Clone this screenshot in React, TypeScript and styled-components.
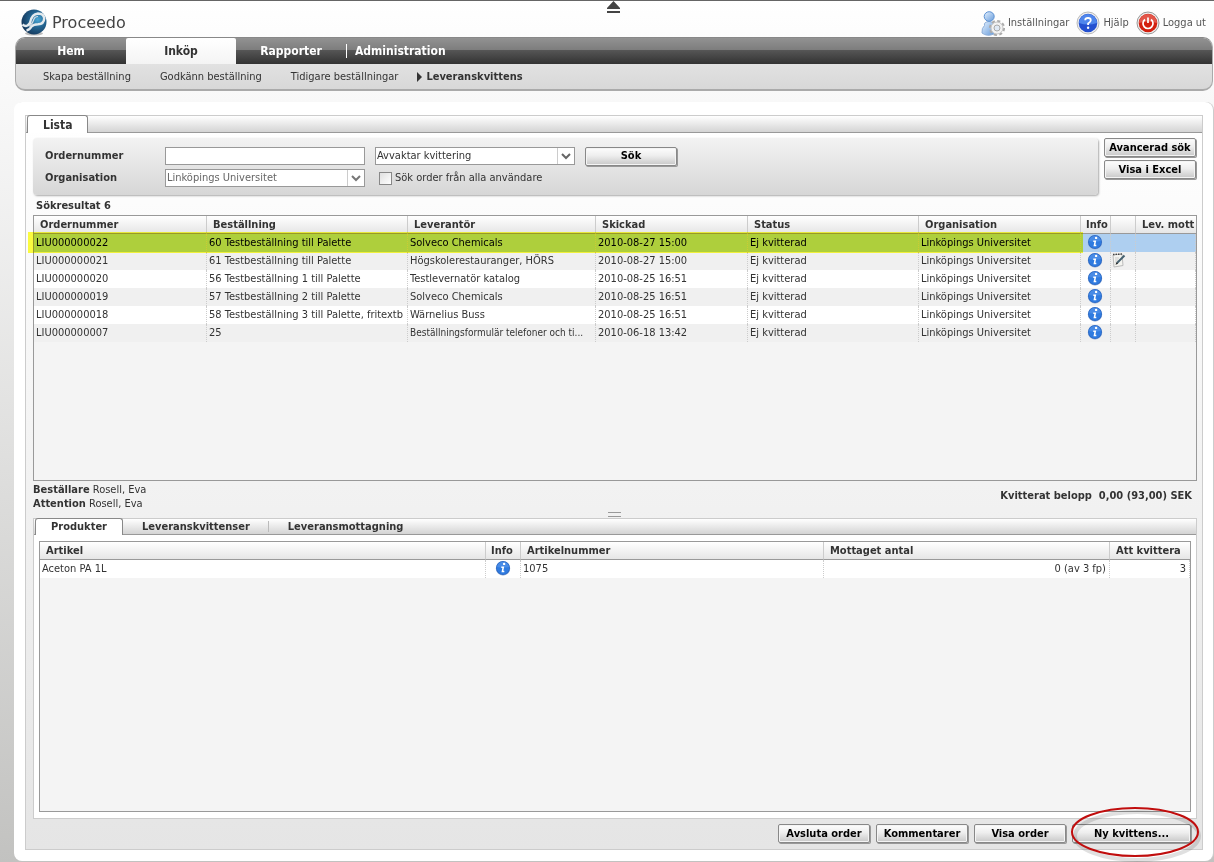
import React from "react";
import styled, { createGlobalStyle, css } from "styled-components";

const GlobalStyle = createGlobalStyle`
  * { box-sizing: border-box; }
  html { min-height: 100%; }
  body {
    margin: 0;
    color: #333;
    font: 11px/14px "DejaVu Sans Condensed", "DejaVu Sans", sans-serif;
    background: linear-gradient(#fff 0, #f8f8f8 12%, #c2c2c0 100%);
  }
  button, input, select { font: inherit; color: inherit; }
`;

const Page = styled.div`
  display: flex;
  flex-direction: column;
  min-height: 100vh;
  padding: 0 1px 2px 14px;
  border-top: 1px solid #666;
`;

const Header = styled.header`
  display: grid;
  grid-template-columns: 1fr auto 1fr;
  height: 36px;
  padding: 0 7px 0 7px;
`;

const Brand = styled.a`
  display: flex;
  align-items: center;
  gap: 5px;
  padding-top: 7px;
  color: #444;
  font-family: "DejaVu Sans", sans-serif;
  font-size: 16px;
  line-height: 20px;
  text-decoration: none;
`;

const CollapseButton = styled.button`
  align-self: start;
  display: flex;
  padding: 0;
  border: 0;
  background: none;
`;

const Tools = styled.nav`
  display: flex;
  justify-content: flex-end;
  align-items: center;
  gap: 7px;
  padding-top: 8px;
`;

const ToolLink = styled.a`
  display: flex;
  align-items: center;
  gap: 3px;
  color: #555;
  text-decoration: none;
`;

const NavFrame = styled.nav`
  overflow: hidden;
  margin-left: 1px;
  border: 1px solid #aaa;
  border-top-color: #888;
  border-bottom-width: 2px;
  border-radius: 10px;
  background: linear-gradient(#ebebeb, #d8d8d8);
`;

const MainNav = styled.div`
  display: flex;
  height: 26px;
  background: linear-gradient(#929292 0, #7c7c7c 48%, #555 48%, #333 100%);
`;

const MainItem = styled.a<{ $active?: boolean; $wide?: boolean }>`
  display: flex;
  align-items: center;
  justify-content: center;
  width: ${(p) => (p.$wide ? "auto" : "110px")};
  color: #fff;
  font-size: 12px;
  font-weight: bold;
  text-decoration: none;
  ${(p) =>
    p.$active &&
    css`
      color: #333;
      border-radius: 2px 2px 0 0;
      background: linear-gradient(#fff, #f4f4f4);
    `}
`;

const Divider = styled.span<{ $light?: boolean }>`
  align-self: center;
  width: 1px;
  height: ${(p) => (p.$light ? "11px" : "14px")};
  margin-right: ${(p) => (p.$light ? "0" : "8px")};
  background: ${(p) => (p.$light ? "#bbb" : "#fff")};
`;

const SubNav = styled.div`
  display: flex;
  align-items: center;
  gap: 29px;
  height: 25px;
  padding-left: 27px;
`;

const SubItem = styled.a<{ $active?: boolean }>`
  display: flex;
  align-items: center;
  gap: 4px;
  color: #333;
  text-decoration: none;
  font-weight: ${(p) => (p.$active ? "bold" : "normal")};
  margin-left: ${(p) => (p.$active ? "-10px" : "0")};
`;

const Panel = styled.main`
  display: flex;
  flex: 1;
  flex-direction: column;
  margin-top: 11px;
  padding: 13px 10px 11px 11px;
  border-radius: 8px;
  background: #fff;
  box-shadow: 1px 0 0 #ccc;
`;

const Frame = styled.section`
  display: flex;
  flex: 1;
  flex-direction: column;
  border: 1px solid #ccc;
  background: linear-gradient(#fff, #e5e5e5);
`;

const TabBar = styled.div<{ $inner?: boolean }>`
  display: flex;
  height: ${(p) => (p.$inner ? "16px" : "17px")};
  border-bottom: 1px solid #999;
  background: linear-gradient(#fff, #d4d4d4);
`;

const Tab = styled.button<{ $active?: boolean; $large?: boolean }>`
  height: ${(p) => (p.$large ? "18px" : "17px")};
  margin: -1px 0 0 1px;
  padding: 0 18px;
  border: 0;
  background: none;
  font-size: ${(p) => (p.$large ? "12px" : "11px")};
  line-height: 16px;
  font-weight: bold;
  ${(p) =>
    p.$active &&
    css`
      padding: 0 15px;
      border: 1px solid #888;
      border-bottom: 0;
      border-radius: 3px 3px 0 0;
      background: #fff;
    `}
`;

const SearchRow = styled.form`
  display: flex;
  align-items: flex-start;
  gap: 6px;
  padding: 5px 6px 0 7px;
`;

const SearchBox = styled.div`
  flex: 1;
  display: grid;
  grid-template-columns: 110px 200px 200px 92px;
  grid-template-rows: 18px 18px;
  column-gap: 10px;
  row-gap: 4px;
  align-items: center;
  height: 57px;
  padding: 9px 0 0 12px;
  border-radius: 4px;
  background: linear-gradient(#f3f3f3, #d6d6d6);
  box-shadow: 1px 1px 2px #aaa;
`;

const FieldLabel = styled.label`
  font-weight: bold;
`;

const TextInput = styled.input`
  width: 100%;
  height: 18px;
  padding: 0 2px;
  border: 1px solid #999;
  background: #fff;
`;

const SelectFrame = styled.span`
  display: grid;
  grid-template-columns: 1fr 17px;
  height: 18px;
  border: 1px solid #999;
  background: #fff;
  svg {
    grid-area: 1 / 2;
    pointer-events: none;
  }
`;

const Select = styled.select<{ $muted?: boolean }>`
  grid-area: 1 / 1 / 2 / 3;
  width: 100%;
  height: 16px;
  padding: 0 1px;
  border: 0;
  appearance: none;
  background: transparent;
  color: ${(p) => (p.$muted ? "#666" : "#333")};
`;

const CheckLabel = styled.label`
  display: flex;
  align-items: center;
  gap: 3px;
  padding-left: 4px;
  white-space: nowrap;
`;

const CheckBox = styled.input`
  width: 13px;
  height: 13px;
  margin: 0;
  appearance: none;
  border: 1px solid #888;
  background: linear-gradient(135deg, #e0e0e0, #fff);
  &:checked { background: #666; }
`;

const Button = styled.button<{ $wide?: boolean }>`
  width: ${(p) => (p.$wide ? "119px" : "92px")};
  height: 19px;
  padding: 0;
  border: 1px solid #888;
  border-radius: 2px;
  background: linear-gradient(#fdfdfd, #eee 45%, #c8c8c8);
  box-shadow: 1px 1px 0 #999, inset 0 0 0 1px #f4f4f4;
  color: #000;
  font-weight: bold;
  line-height: 16px;
  white-space: nowrap;
`;

const SideButtons = styled.div`
  display: flex;
  flex-direction: column;
  gap: 3px;
`;

const ResultCount = styled.h2`
  margin: 4px 0 2px 10px;
  font-size: 11px;
  line-height: 14px;
`;

const GridBox = styled.div<{ $lower?: boolean }>`
  flex: 1 0 ${(p) => (p.$lower ? "271px" : "266px")};
  position: relative;
  margin: ${(p) => (p.$lower ? "6px 5px 6px" : "0 5px 0 7px")};
  border: 1px solid #999;
  background: #f4f4f4;
`;

const Table = styled.table`
  width: 100%;
  table-layout: fixed;
  border-collapse: separate;
  border-spacing: 0;
`;

const Th = styled.th<{ $tight?: boolean }>`
  height: 18px;
  padding: 0 0 0 ${(p) => (p.$tight ? "5px" : "6px")};
  overflow: hidden;
  border-right: 1px solid #ccc;
  border-bottom: 1px solid #999;
  background: linear-gradient(#fff, #e6e6e6);
  text-align: left;
  white-space: nowrap;
  &:last-child { border-right: 0; }
`;

const Td = styled.td<{ $right?: boolean; $compact?: boolean }>`
  height: 18px;
  padding: 0 ${(p) => (p.$right ? "3px" : "0")} 0 2px;
  overflow: hidden;
  border-right: 1px dotted #ccc;
  font-size: ${(p) => (p.$compact ? "10px" : "11px")};
  text-align: ${(p) => (p.$right ? "right" : "left")};
  white-space: nowrap;
`;

const IconTd = styled(Td)<{ $start?: boolean }>`
  padding: 0 ${(p) => (p.$start ? "8px" : "1px")} 0 0;
  line-height: 0;
  text-align: center;
  vertical-align: top;
`;

const Row = styled.tr<{ $selected?: boolean }>`
  color: ${(p) => (p.$selected ? "#000" : "#333")};
  background: ${(p) => (p.$selected ? "#aecff0" : "#fff")};
  &:nth-child(even) { background: #f0f0f0; }
`;

const Marker = styled.div`
  position: absolute;
  top: 16px;
  left: -6px;
  right: 113px;
  height: 21px;
  background: #ffff40;
  mix-blend-mode: multiply;
  pointer-events: none;
`;

const Summary = styled.div`
  display: flex;
  justify-content: space-between;
  align-items: center;
  height: 30px;
  margin-top: 1px;
  padding: 0 10px 0 7px;
`;

const Person = styled.p`
  margin: 0;
`;

const Amount = styled.p`
  margin: 0;
  padding-bottom: 2px;
  font-weight: bold;
`;

const Splitter = styled.div`
  display: flex;
  justify-content: center;
  height: 6px;
  &::before {
    content: "";
    width: 13px;
    height: 3px;
    border: solid #999;
    border-width: 1px 0;
  }
`;

const Details = styled.section`
  display: flex;
  flex: 1 0 auto;
  flex-direction: column;
  margin: 0 5px 0 7px;
  border: 1px solid #ccc;
  background: #fff;
`;

const Actions = styled.div`
  display: flex;
  justify-content: flex-end;
  gap: 6px;
  padding: 5px 11px 6px;
`;

const Circled = styled.span`
  position: relative;
  display: flex;
  svg {
    position: absolute;
    top: -19px;
    left: -4px;
    pointer-events: none;
  }
`;

const Arrow = ({ muted }: { muted?: boolean }) => (
  <svg width="17" height="16" aria-hidden="true">
    <path d="M.5 0v16" stroke="#ccc" />
    <path d="M5 6l4 4 4-4" fill="none" stroke={muted ? "#777" : "#666"} strokeWidth="2" />
  </svg>
);

const InfoIcon = () => (
  <svg width="16" height="16" viewBox="0 0 16 16" role="img" aria-label="Info">
    <circle cx="8" cy="8.5" r="7.2" fill="#a9bdda" />
    <circle cx="8" cy="8" r="7" fill="#2b68c4" />
    <circle cx="8" cy="8" r="6.2" fill="#2f7be0" />
    <path d="M2.2 7a5.800 5.200 0 0 1 11.600 0Q8 8.500 2.200 7" fill="#78aaf0" opacity=".35" />
    <circle cx="9.100" cy="3.900" r="1.200" fill="#fff" />
    <path d="M6.300 7.200H8.300L7.400 11.500H9.300" fill="none" stroke="#fff" strokeWidth="1.500" />
  </svg>
);

const NoteIcon = () => (
  <svg width="16" height="16" viewBox="0 0 16 16" role="img" aria-label="Kommentar">
    <path d="M2 3L11 2l1 11.500-9 1.500z" fill="#f4f4f0" stroke="#bbb" />
    <path d="M2 2.500l10-.5" stroke="#444" strokeWidth="1.500" strokeDasharray="1.500 1" />
    <path d="M4 6h4M4 8h3M4 10h2" stroke="#ccc" />
    <path d="M6 11L13.500 3.500" stroke="#456070" strokeWidth="2" />
    <path d="M4.500 12.800l1-2.500 1.700 1.400z" fill="#222" />
  </svg>
);

const Logo = () => (
  <svg width="26" height="27" viewBox="0 0 26 27" aria-hidden="true">
    <defs>
      <radialGradient id="globe" cx=".65" cy=".4" r=".65">
        <stop offset="0" stopColor="#4aa8d6" />
        <stop offset=".5" stopColor="#23638f" />
        <stop offset="1" stopColor="#163a5e" />
      </radialGradient>
    </defs>
    <ellipse cx="13" cy="24.500" rx="9" ry="2" fill="#bbb" />
    <circle cx="13" cy="13" r="12.500" fill="url(#globe)" />
    <path d="M1.500 15.500Q6 19 9 14Q10.500 5 17 4.500Q23 4.500 23.200 9.500Q23 15 17 15.300Q12.500 15.300 10.500 17.500Q8.500 21 5.500 21.500" fill="none" stroke="#e4eaee" strokeWidth="2.500" />
    <path d="M8.500 17.500Q12 14 13 10Q14 7.500 17 7.500" fill="none" stroke="#d5dee5" strokeWidth="1.200" />
  </svg>
);

const SettingsIcon = () => (
  <svg width="24" height="25" viewBox="0 0 24 25" aria-hidden="true">
    <defs>
      <linearGradient id="person" x1="0" y1="0" x2="1" y2="1">
        <stop offset="0" stopColor="#e6f2ff" />
        <stop offset="1" stopColor="#669bdb" />
      </linearGradient>
    </defs>
    <path d="M1 22Q.5 17 3.500 14.500Q2.500 11 8 10.500Q13 11 13 15L13 23Q6 26 1 22z" fill="url(#person)" stroke="#8fafd8" />
    <ellipse cx="8.200" cy="5.500" rx="5" ry="4.800" fill="url(#person)" stroke="#5c91d2" />
    <circle cx="16" cy="17" r="6.800" fill="none" stroke="#aaa" strokeWidth="2.500" strokeDasharray="3 2.340" />
    <circle cx="16" cy="17" r="6" fill="#f2f2f2" stroke="#c4c4c4" />
    <circle cx="16" cy="17" r="3" fill="#dfe9f5" stroke="#aaa" />
  </svg>
);

const HelpIcon = () => (
  <svg width="24" height="24" viewBox="0 0 24 24" aria-hidden="true">
    <circle cx="12" cy="12" r="11" fill="#eee" stroke="#bbb" />
    <circle cx="12" cy="12" r="9.300" fill="#2450d0" />
    <path d="M3 12a9 9 0 0 1 18 0Q12 15 3 12" fill="#4f86ec" />
    <path d="M9.200 9.300Q9.200 7 12 7Q14.800 7 14.800 9.200Q14.800 10.800 12.100 12.500V14" fill="none" stroke="#fff" strokeWidth="1.800" />
    <circle cx="12.100" cy="16.700" r="1.200" fill="#fff" />
  </svg>
);

const PowerIcon = () => (
  <svg width="24" height="24" viewBox="0 0 24 24" aria-hidden="true">
    <circle cx="12" cy="12" r="11" fill="#eee" stroke="#999" />
    <circle cx="12" cy="12" r="9.300" fill="#d3200f" />
    <path d="M3 12a9 9 0 0 1 18 0Q12 9 3 12" fill="#e2564a" />
    <path d="M9 8.500a5 5 0 1 0 6 0M12 6.500v5.500" fill="none" stroke="#fff" strokeWidth="1.700" />
  </svg>
);

const orders = [
  ["LIU000000022", "60 Testbeställning till Palette", "Solveco Chemicals", "2010-08-27 15:00"],
  ["LIU000000021", "61 Testbeställning till Palette", "Högskolerestauranger, HÖRS", "2010-08-27 15:00"],
  ["LIU000000020", "56 Testbeställning 1 till Palette", "Testlevernatör katalog", "2010-08-25 16:51"],
  ["LIU000000019", "57 Testbeställning 2 till Palette", "Solveco Chemicals", "2010-08-25 16:51"],
  ["LIU000000018", "58 Testbeställning 3 till Palette, fritextb", "Wärnelius Buss", "2010-08-25 16:51"],
  ["LIU000000007", "25", "Beställningsformulär telefoner och ti...", "2010-06-18 13:42"],
];

const orderWidths = [173, 201, 188, 152, 171, 162, 30, 25];
const productWidths = [446, 35, 303, 286];

export default function App() {
  return (
    <>
      <GlobalStyle />
      <Page>
        <Header>
          <Brand href="#"><Logo />Proceedo</Brand>
          <CollapseButton aria-label="Dölj sidhuvud">
            <svg width="13" height="12" aria-hidden="true">
              <path d="M6.500 0L13 7v1H0V7zM0 10h13v2H0z" fill="#444" />
            </svg>
          </CollapseButton>
          <Tools>
            <ToolLink href="#"><SettingsIcon />Inställningar</ToolLink>
            <ToolLink href="#"><HelpIcon />Hjälp</ToolLink>
            <ToolLink href="#"><PowerIcon />Logga ut</ToolLink>
          </Tools>
        </Header>

        <NavFrame>
          <MainNav>
            <MainItem href="#">Hem</MainItem>
            <MainItem href="#" $active>Inköp</MainItem>
            <MainItem href="#">Rapporter</MainItem>
            <Divider />
            <MainItem href="#" $wide>Administration</MainItem>
          </MainNav>
          <SubNav>
            <SubItem href="#">Skapa beställning</SubItem>
            <SubItem href="#">Godkänn beställning</SubItem>
            <SubItem href="#">Tidigare beställningar</SubItem>
            <SubItem href="#" $active>
              <svg width="5" height="10" aria-hidden="true"><path d="M0 0l5 5-5 5z" fill="#333" /></svg>
              Leveranskvittens
            </SubItem>
          </SubNav>
        </NavFrame>

        <Panel>
          <Frame>
            <TabBar><Tab $active $large>Lista</Tab></TabBar>
            <SearchRow onSubmit={(e) => e.preventDefault()}>
              <SearchBox>
                <FieldLabel htmlFor="order">Ordernummer</FieldLabel>
                <TextInput id="order" />
                <SelectFrame>
                  <Select aria-label="Status"><option>Avvaktar kvittering</option></Select>
                  <Arrow />
                </SelectFrame>
                <Button>Sök</Button>
                <FieldLabel htmlFor="org">Organisation</FieldLabel>
                <SelectFrame>
                  <Select id="org" $muted><option>Linköpings Universitet</option></Select>
                  <Arrow muted />
                </SelectFrame>
                <CheckLabel><CheckBox type="checkbox" />Sök order från alla användare</CheckLabel>
              </SearchBox>
              <SideButtons>
                <Button type="button">Avancerad sök</Button>
                <Button type="button">Visa i Excel</Button>
              </SideButtons>
            </SearchRow>

            <ResultCount>Sökresultat 6</ResultCount>
            <GridBox>
              <Table>
                <colgroup>
                  {orderWidths.map((w, i) => <col key={i} width={w} />)}
                  <col />
                </colgroup>
                <thead>
                  <tr>
                    <Th>Ordernummer</Th><Th>Beställning</Th><Th>Leverantör</Th><Th>Skickad</Th>
                    <Th>Status</Th><Th>Organisation</Th><Th $tight>Info</Th><Th /><Th>Lev. mott</Th>
                  </tr>
                </thead>
                <tbody>
                  {orders.map((cells, i) => (
                    <Row key={cells[0]} $selected={i === 0}>
                      {cells.map((c, j) => <Td key={j} $compact={j === 2 && c.length > 30}>{c}</Td>)}
                      <Td>Ej kvitterad</Td>
                      <Td>Linköpings Universitet</Td>
                      <IconTd><InfoIcon /></IconTd>
                      <IconTd $start>{i === 1 && <NoteIcon />}</IconTd>
                      <Td />
                    </Row>
                  ))}
                </tbody>
              </Table>
              <Marker />
            </GridBox>

            <Summary>
              <div>
                <Person><b>Beställare</b> Rosell, Eva</Person>
                <Person><b>Attention</b> Rosell, Eva</Person>
              </div>
              <Amount>Kvitterat belopp&nbsp; 0,00 (93,00) SEK</Amount>
            </Summary>
            <Splitter />

            <Details>
              <TabBar $inner>
                <Tab $active>Produkter</Tab>
                <Tab>Leveranskvittenser</Tab>
                <Divider $light />
                <Tab>Leveransmottagning</Tab>
              </TabBar>
              <GridBox $lower>
                <Table>
                  <colgroup>
                    {productWidths.map((w, i) => <col key={i} width={w} />)}
                    <col />
                  </colgroup>
                  <thead>
                    <tr>
                      <Th>Artikel</Th><Th $tight>Info</Th><Th>Artikelnummer</Th>
                      <Th>Mottaget antal</Th><Th>Att kvittera</Th>
                    </tr>
                  </thead>
                  <tbody>
                    <Row>
                      <Td>Aceton PA 1L</Td>
                      <IconTd><InfoIcon /></IconTd>
                      <Td>1075</Td>
                      <Td $right>0 (av 3 fp)</Td>
                      <Td $right>3</Td>
                    </Row>
                  </tbody>
                </Table>
              </GridBox>
            </Details>

            <Actions>
              <Button>Avsluta order</Button>
              <Button>Kommentarer</Button>
              <Button>Visa order</Button>
              <Circled>
                <Button $wide>Ny kvittens...</Button>
                <svg width="140" height="62" aria-hidden="true">
                  <ellipse cx="69" cy="31" rx="62" ry="24" fill="none" stroke="#000" strokeOpacity=".12" strokeWidth="4" />
                  <ellipse cx="67" cy="27" rx="63" ry="24" fill="none" stroke="#c00d0d" strokeWidth="2" />
                </svg>
              </Circled>
            </Actions>
          </Frame>
        </Panel>
      </Page>
    </>
  );
}
